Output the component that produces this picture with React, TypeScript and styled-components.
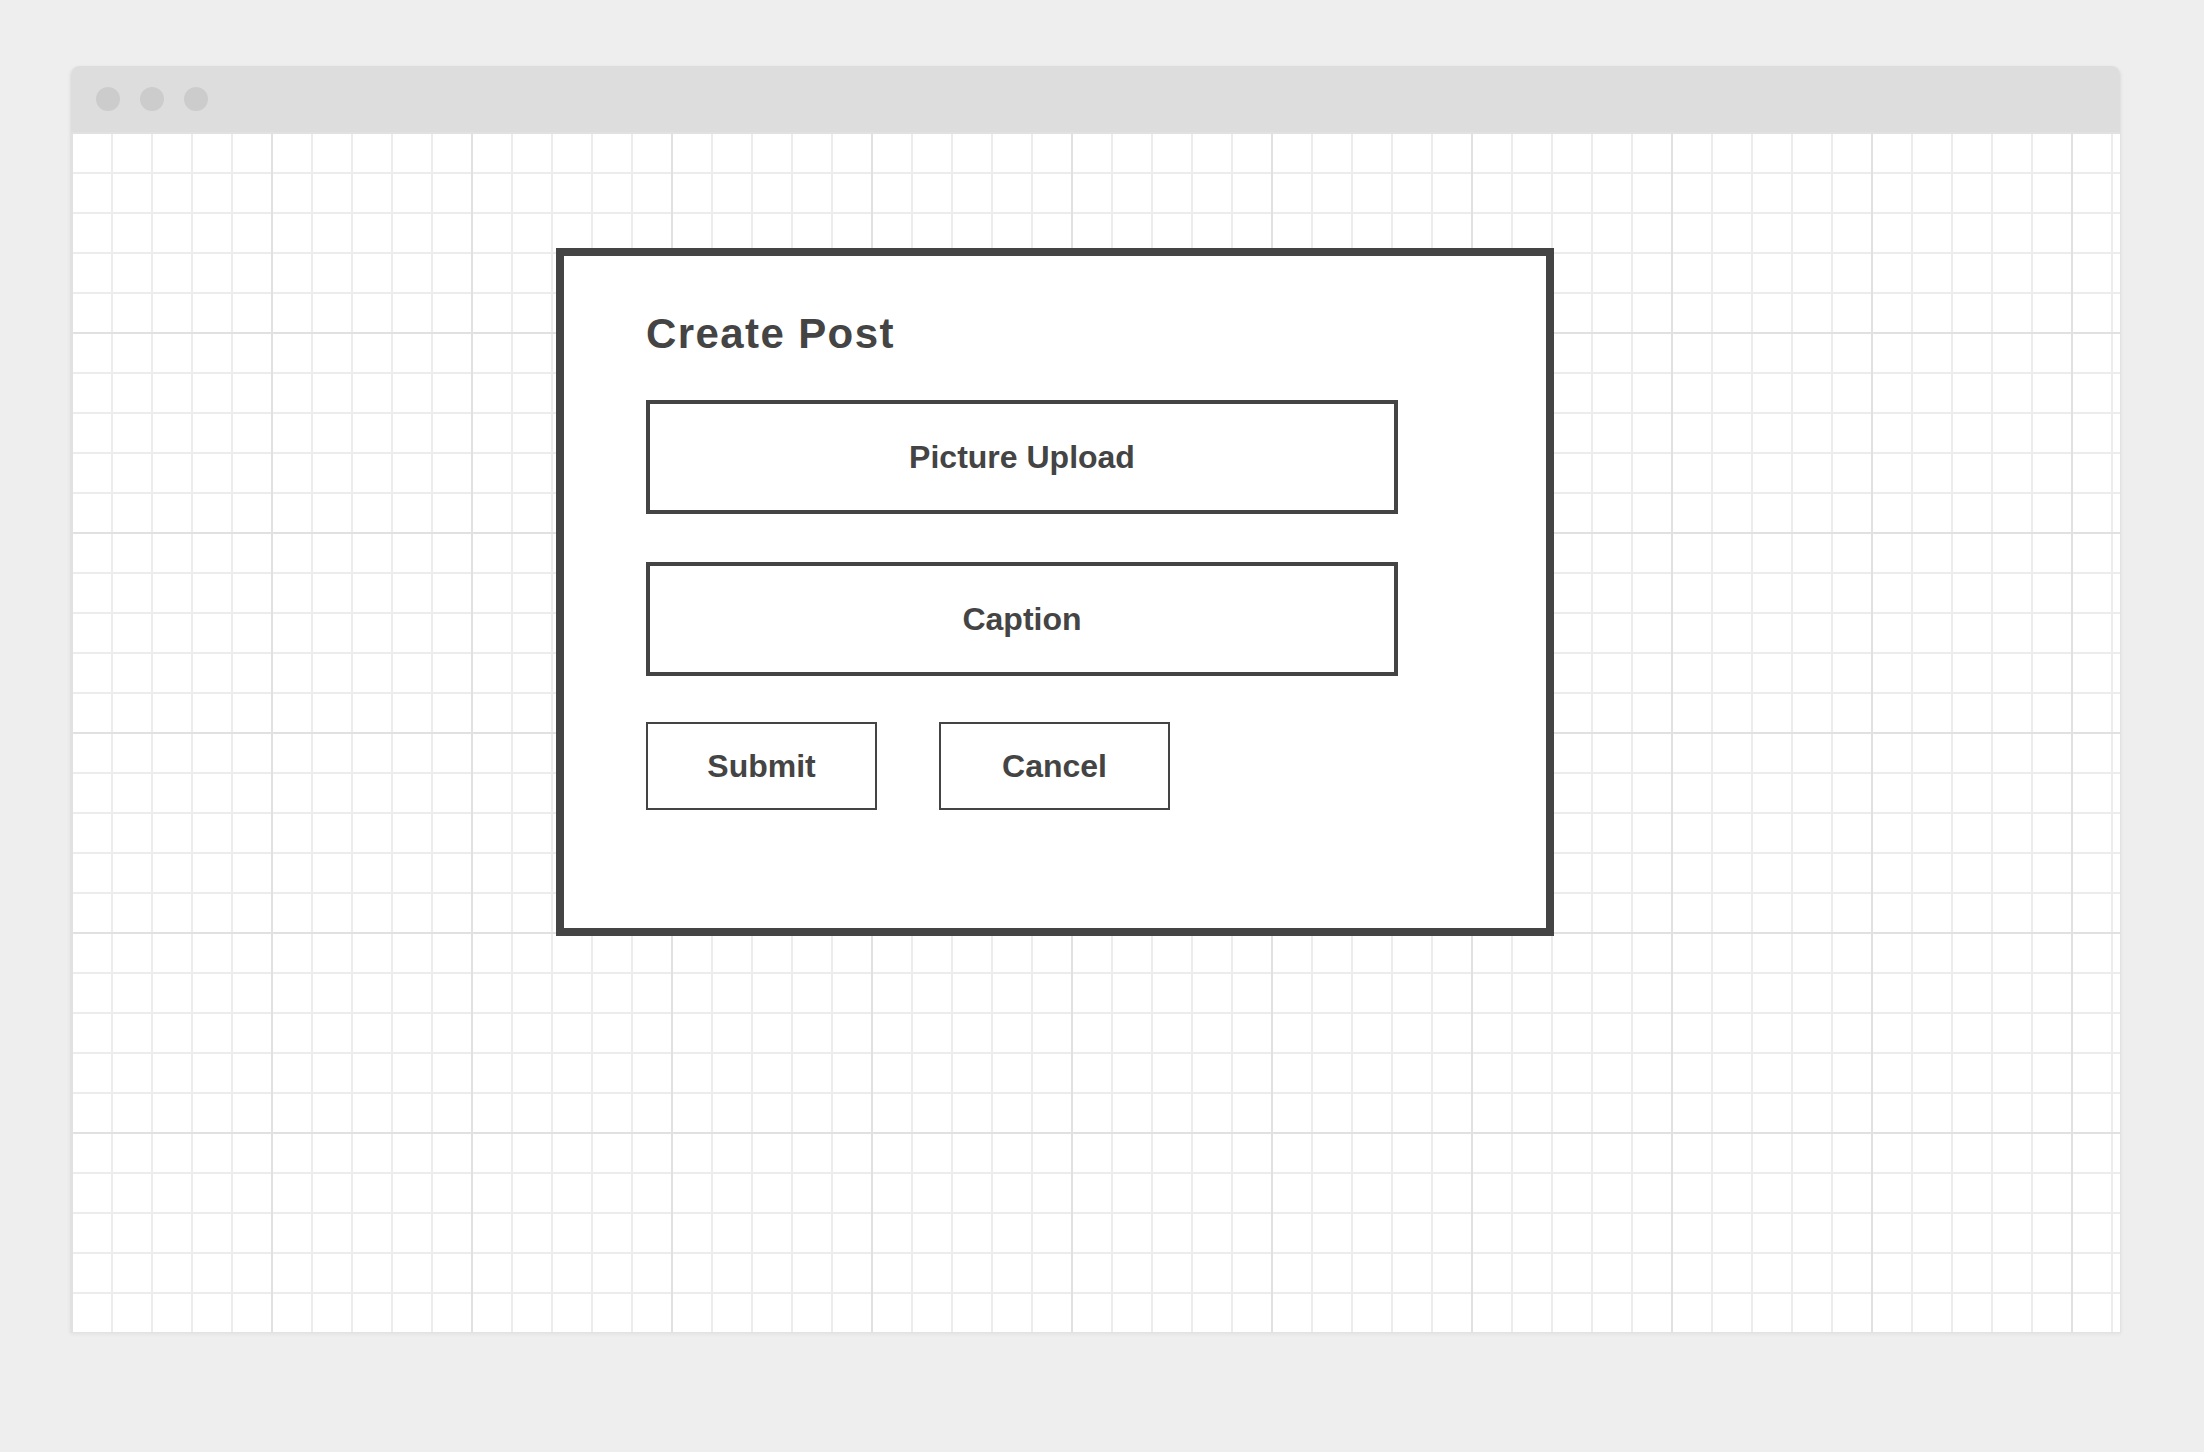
import React from "react";
import styled, { createGlobalStyle } from "styled-components";

const GlobalStyle = createGlobalStyle`
  html, body {
    margin: 0;
    padding: 0;
    background: #eeeeee;
    font-family: "Liberation Sans", Arial, sans-serif;
  }
  * { box-sizing: border-box; }
`;

const Page = styled.div`
  width: 2204px;
  height: 1452px;
  padding: 66px 0 0 70px;
  background: #eeeeee;
`;

const Window = styled.div`
  width: 2051px;
  border: 1px solid #e2e2e2;
  border-top: none;
  border-radius: 9px 9px 0 0;
  box-shadow: 0 1px 4px rgba(0, 0, 0, 0.06);
  overflow: hidden;
  display: flex;
  flex-direction: column;
`;

const TitleBar = styled.div`
  height: 66px;
  margin: 0 -1px;
  background: #dddddd;
  display: flex;
  align-items: center;
  gap: 20px;
  padding-left: 26px;
`;

const Dot = styled.span`
  width: 24px;
  height: 24px;
  border-radius: 50%;
  background: #cccccc;
`;

const Canvas = styled.div`
  height: 1200px;
  background-color: #ffffff;
  background-image:
    linear-gradient(to right, #e1e1e1 2px, transparent 2px),
    linear-gradient(to bottom, #e1e1e1 2px, transparent 2px),
    linear-gradient(to right, #ececec 2px, transparent 2px),
    linear-gradient(to bottom, #ececec 2px, transparent 2px);
  background-size: 200px 200px, 200px 200px, 40px 40px, 40px 40px;
  background-position: 0 0, 0 0, 0 0, 0 0;
  padding: 116px 0 0 485px;
`;

const Modal = styled.div`
  width: 998px;
  height: 688px;
  border: 8px solid #444444;
  background: #ffffff;
  padding: 54px 0 0 82px;
  display: flex;
  flex-direction: column;
`;

const Title = styled.h1`
  margin: 0;
  font-size: 42px;
  line-height: 48px;
  font-weight: 700;
  letter-spacing: 1.4px;
  color: #444444;
`;

const Field = styled.div<{ $top: number }>`
  width: 752px;
  height: 114px;
  margin-top: ${(p) => p.$top}px;
  border: 4px solid #444444;
  display: flex;
  align-items: center;
  justify-content: center;
  font-size: 32px;
  font-weight: 700;
  color: #444444;
`;

const Actions = styled.div`
  display: flex;
  gap: 62px;
  margin-top: 46px;
`;

const Button = styled.button`
  width: 231px;
  height: 88px;
  border: 2px solid #444444;
  background: #ffffff;
  padding: 0;
  display: flex;
  align-items: center;
  justify-content: center;
  font-family: "Liberation Sans", Arial, sans-serif;
  font-size: 32px;
  font-weight: 700;
  color: #444444;
  cursor: pointer;
`;

export default function App() {
  return (
    <>
      <GlobalStyle />
      <Page>
        <Window>
          <TitleBar>
            <Dot />
            <Dot />
            <Dot />
          </TitleBar>
          <Canvas>
            <Modal>
              <Title>Create Post</Title>
              <Field $top={42}>Picture Upload</Field>
              <Field $top={48}>Caption</Field>
              <Actions>
                <Button>Submit</Button>
                <Button>Cancel</Button>
              </Actions>
            </Modal>
          </Canvas>
        </Window>
      </Page>
    </>
  );
}
